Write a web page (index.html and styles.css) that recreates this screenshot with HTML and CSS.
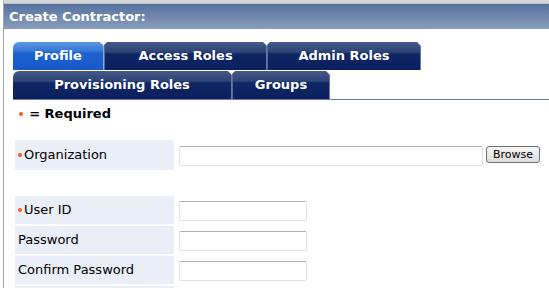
FILE: index.html
```html
<!DOCTYPE html>
<html lang="en">
<head>
  <meta charset="UTF-8">
  <meta name="viewport" content="width=device-width, initial-scale=1.0">
  <link rel="stylesheet" href="styles.css">
</head>
<body>
<div class="page">
  <div class="title-bar">Create Contractor:</div>
  <div class="content">
    <div class="tabs">
      <div class="tab-row">
        <div class="tab tab-first active" style="width: 91px">Profile</div>
        <div class="tab" style="width: 163px">Access Roles</div>
        <div class="tab" style="width: 154px">Admin Roles</div>
      </div>
      <div class="tab-row tab-row-last">
        <div class="tab tab-first" style="width: 219px">Provisioning Roles</div>
        <div class="tab" style="width: 98px">Groups</div>
      </div>
    </div>

    <div class="legend"><span class="req"></span> <b>= Required</b></div>

    <div class="form-grid">
      <div class="label label-tall"><span class="req"></span>Organization</div>
      <div class="field field-tall">
        <input type="text" class="input input-wide">
        <button class="browse-button">Browse</button>
      </div>
    </div>

    <div class="form-grid form-grid-gap">
      <div class="label"><span class="req"></span>User ID</div>
      <div class="field"><input type="text" class="input"></div>
      <div class="label">Password</div>
      <div class="field"><input type="password" class="input"></div>
      <div class="label">Confirm Password</div>
      <div class="field"><input type="password" class="input"></div>
      <div class="label"></div>
      <div class="field"></div>
    </div>
  </div>
</div>
</body>
</html>
```

FILE: styles.css
```css
body {
  margin: 0;
  overflow: hidden;
  font-family: "DejaVu Sans", Verdana, sans-serif;
  font-size: 13px;
  background-color: #ffffff;
}

.page {
  margin-left: 3px;
  border-left: 1px solid #a4a4a4;
  border-top: 3px solid #d6d6d6;
  height: 285px;
  overflow: hidden;
}

.title-bar {
  height: 26px;
  line-height: 25px;
  padding-left: 5px;
  color: #ffffff;
  font-weight: bold;
  font-size: 13px;
  background: linear-gradient(#5772a0, #8a9dbb);
  border-top: 1px solid #b8c2d4;
  box-sizing: border-box;
}

.content {
  padding-left: 9px;
}

.tabs {
  margin-top: 13px;
}

.tab-row {
  display: flex;
  height: 28px;
  margin-bottom: 1px;
}

.tab-row-last {
  border-bottom: 1px solid #6e7ca6;
  height: 28px;
  margin-bottom: 0;
}

.tab {
  box-sizing: border-box;
  height: 28px;
  line-height: 28px;
  text-align: center;
  color: #ffffff;
  font-weight: bold;
  font-size: 13px;
  background: linear-gradient(#45598a 0, #2f4476 36%, #112765 42%, #0a1f5d 100%);
  border-left: 1px solid #55689a;
  border-right: 1px solid #6a78a0;
  clip-path: polygon(3px 0, calc(100% - 4px) 0, 100% 4px, 100% 100%, 0 100%, 0 3px);
}

.tab-first {
  border-left: none;
  border-top-left-radius: 6px;
  clip-path: polygon(0 0, calc(100% - 4px) 0, 100% 4px, 100% 100%, 0 100%);
}

.tab.active {
  background: linear-gradient(#5c98e4 0, #3a7ad8 30%, #1e62d0 40%, #1858c8 100%);
  border-right: 1px solid #8aa8d8;
}

.legend {
  height: 15px;
  line-height: 15px;
  margin: 6px 0 0 6px;
  font-size: 13px;
}

.req {
  display: inline-block;
  width: 4px;
  height: 4px;
  border-radius: 50%;
  background-color: #ff5a10;
  vertical-align: middle;
  margin: 0 2px 2px 0;
}

.form-grid {
  display: grid;
  grid-template-columns: 159px 1fr;
  gap: 2px;
  margin: 19px 0 0 2px;
}

.form-grid-gap {
  margin-top: 26px;
}

.label {
  height: 28px;
  line-height: 28px;
  padding-left: 3px;
  background-color: #e9eef7;
  color: #000000;
  white-space: nowrap;
}

.label-tall {
  height: 30px;
  line-height: 30px;
}

.field {
  display: flex;
  align-items: center;
  padding-left: 3px;
}

.input {
  box-sizing: border-box;
  width: 128px;
  height: 20px;
  border: 1px solid #dfe2e8;
  border-top-color: #abadb3;
  border-left-color: #e2e3ea;
  border-radius: 2px;
  padding: 0 3px;
  font-size: 12px;
  outline: none;
  margin-top: 1px;
}

.input-wide {
  width: 304px;
  margin-top: 2px;
}

.browse-button {
  box-sizing: border-box;
  width: 54px;
  height: 17px;
  margin: 0 0 2px 3px;
  padding: 0;
  font-family: "DejaVu Sans", Verdana, sans-serif;
  font-size: 11px;
  color: #000000;
  border: 1px solid #707070;
  border-radius: 3px;
  background: linear-gradient(#f6f6f6, #dcdcdc);
}
```
